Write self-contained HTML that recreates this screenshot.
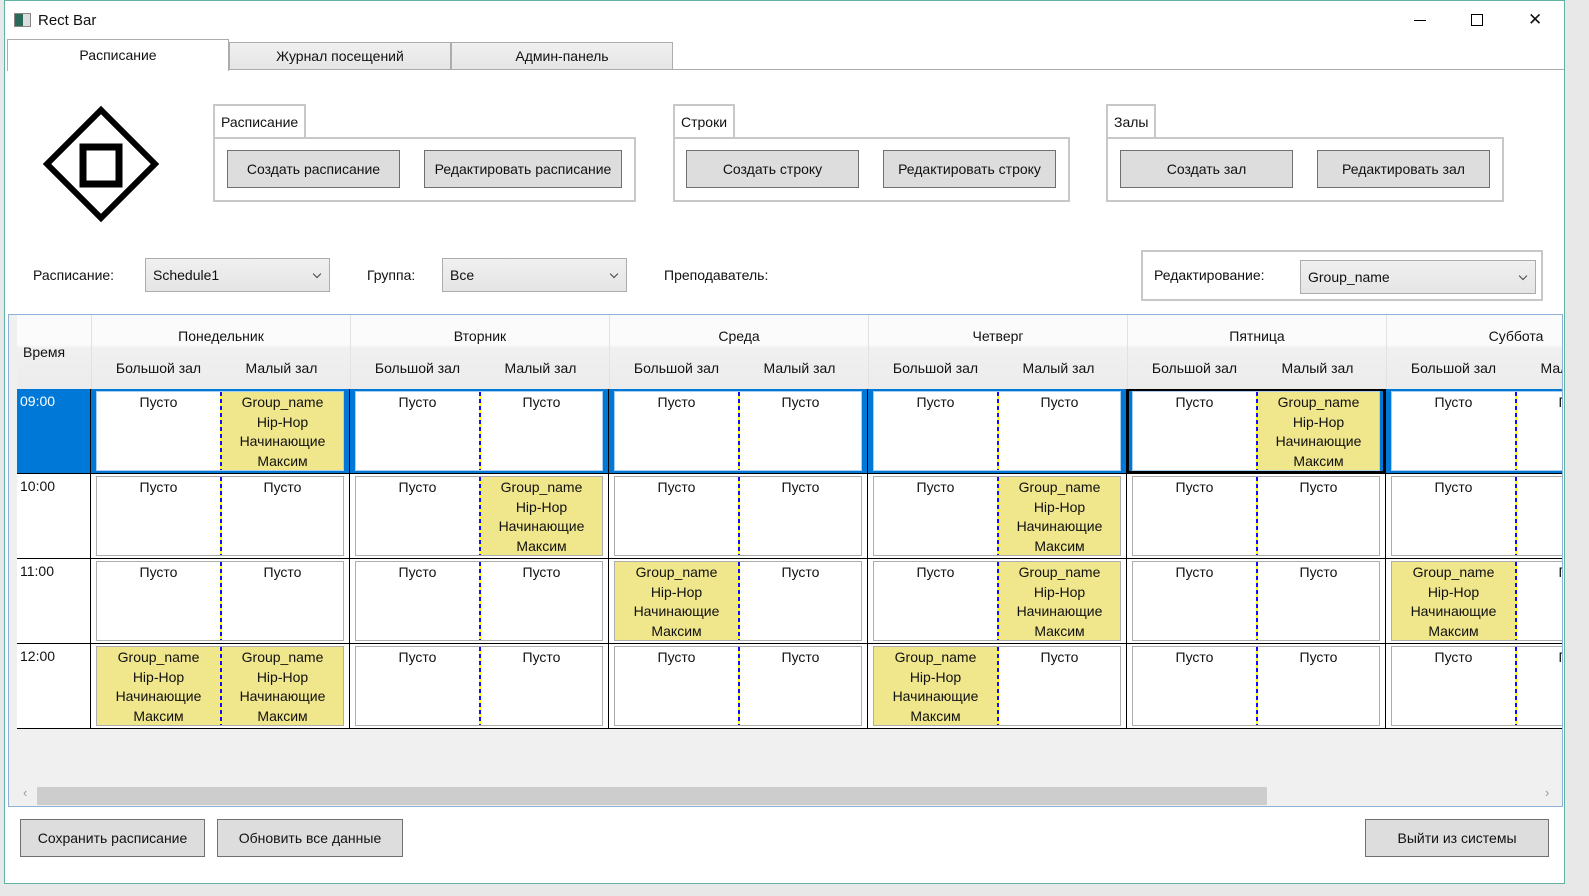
<!DOCTYPE html>
<html><head><meta charset="utf-8"><style>
*{box-sizing:border-box;margin:0;padding:0}
body{width:1589px;height:896px;overflow:hidden;background:#e8e8e8;font-family:"Liberation Sans",sans-serif;font-size:14px;color:#111;position:relative}
.a{position:absolute}
.win{left:4px;top:0;width:1561px;height:884px;background:#fff;border:1px solid #5fb3a3}
.btn{position:absolute;background:#dddddd;border:1px solid #707070;display:flex;align-items:center;justify-content:center;font-size:14px;color:#111}
.gb{position:absolute;border:2px solid #c8c8c8}
.gt{position:absolute;border:2px solid #c8c8c8;border-bottom:none;background:#fff;padding:8px 6px 0 6px;font-size:14px}
.tab{position:absolute;top:42px;height:28px;border:1px solid #acacac;background:linear-gradient(#f0f0f0,#e5e5e5);display:flex;align-items:center;justify-content:center}
.cb{position:absolute;border:1px solid #acacac;background:linear-gradient(#f0f0f0,#e5e5e5);padding-left:7px;display:flex;align-items:center}
.cb:after{content:"";position:absolute;right:9px;top:12px;width:5px;height:5px;border-right:1px solid #444;border-bottom:1px solid #444;transform:rotate(45deg)}
.grid{left:8px;top:314px;width:1555px;height:493px;border:1px solid #8fb0d8;background:#f0f0f0;overflow:hidden}
.hdr{position:absolute;left:8px;top:0;width:1700px;height:74px;background:linear-gradient(#fbfbfb 0,#fbfbfb 40%,#f0f0f0 45%,#ececec 100%)}
.dn{position:absolute;width:259px;text-align:center;border-left:1px solid #e2e2e2;height:74px;top:0;padding-top:13px}
.hn{position:absolute;top:45px;width:123px;text-align:center}
.row{position:absolute;left:8px;height:85px;display:flex;border-bottom:1px solid #000;width:1700px;background:#fff}
.t{width:74px;border-right:1px solid #000;padding:4px 3px;height:84px}
.d{width:259px;border-right:1px solid #000;height:84px;padding:2px 5px 2px 5px}
.bx{border:1px solid #adadad;height:80px;display:flex;background:#fff}
.h{width:123px;text-align:center;line-height:19.5px;padding-top:1px;overflow:hidden;white-space:nowrap}
.h+.h{background-image:repeating-linear-gradient(#1010ff 0 4px,#ffff00 4px 7px);background-size:2px 100%;background-repeat:no-repeat;background-position:0 0;padding-left:2px}
.g{background-color:#f0e68c}
.sel .t{background:#0078d7;color:#fff}
.sel .d{background:#0078d7}
.sel .bx{border-color:#a9cdee}
.sel .fr{box-shadow:inset 0 0 0 2px #000}
</style></head><body>
<div class="a win"></div>
<div class="a" style="left:14px;top:13px;width:17px;height:14px;border:1px solid #888;background:linear-gradient(90deg,#2a6a5a 0 55%,#ddd 55%)"></div>
<div class="a" style="left:38px;top:12px;font-size:15px">Rect Bar</div>
<div class="a" style="left:1414px;top:20px;width:12px;height:1px;background:#000"></div>
<div class="a" style="left:1471px;top:14px;width:12px;height:12px;border:1px solid #000"></div>
<div class="a" style="left:1528px;top:13px;font-size:17px;line-height:14px">✕</div>
<div class="tab" style="left:229px;width:222px">Журнал посещений</div>
<div class="tab" style="left:451px;width:222px">Админ-панель</div>
<div class="a" style="left:672px;top:69px;width:892px;height:1px;background:#acacac"></div>
<div class="tab" style="left:7px;top:39px;width:222px;height:32px;background:#fff;border-bottom:none;padding-bottom:2px">Расписание</div>
<svg class="a" style="left:40px;top:104px" width="124" height="122"><polygon points="61,6 115,60 61,114 7,60" fill="none" stroke="#000" stroke-width="6"/><rect x="43" y="43" width="36" height="37" fill="none" stroke="#000" stroke-width="7"/></svg>

<div class="gt" style="left:213px;top:104px;height:35px">Расписание</div>
<div class="gb" style="left:213px;top:137px;width:423px;height:65px"></div>
<div class="btn" style="left:227px;top:150px;width:173px;height:38px">Создать расписание</div>
<div class="btn" style="left:424px;top:150px;width:198px;height:38px">Редактировать расписание</div>
<div class="gt" style="left:673px;top:104px;height:35px">Строки</div>
<div class="gb" style="left:673px;top:137px;width:397px;height:65px"></div>
<div class="btn" style="left:686px;top:150px;width:173px;height:38px">Создать строку</div>
<div class="btn" style="left:883px;top:150px;width:173px;height:38px">Редактировать строку</div>
<div class="gt" style="left:1106px;top:104px;height:35px">Залы</div>
<div class="gb" style="left:1106px;top:137px;width:398px;height:65px"></div>
<div class="btn" style="left:1120px;top:150px;width:173px;height:38px">Создать зал</div>
<div class="btn" style="left:1317px;top:150px;width:173px;height:38px">Редактировать зал</div>

<div class="a" style="left:33px;top:267px">Расписание:</div>
<div class="cb" style="left:145px;top:258px;width:185px;height:34px">Schedule1</div>
<div class="a" style="left:367px;top:267px">Группа:</div>
<div class="cb" style="left:442px;top:258px;width:185px;height:34px">Все</div>
<div class="a" style="left:664px;top:267px">Преподаватель:</div>
<div class="gb" style="left:1141px;top:250px;width:402px;height:51px"></div>
<div class="a" style="left:1154px;top:267px">Редактирование:</div>
<div class="cb" style="left:1300px;top:260px;width:236px;height:34px">Group_name</div>

<div class="a grid">
<div class="hdr">
<div style="position:absolute;left:6px;top:29px">Время</div>
<div class="dn" style="left:74px">Понедельник</div><div class="dn" style="left:333px">Вторник</div><div class="dn" style="left:592px">Среда</div><div class="dn" style="left:851px">Четверг</div><div class="dn" style="left:1110px">Пятница</div><div class="dn" style="left:1369px">Суббота</div>
<div class="hn" style="left:80px">Большой зал</div><div class="hn" style="left:203px">Малый зал</div>
<div class="hn" style="left:339px">Большой зал</div><div class="hn" style="left:462px">Малый зал</div>
<div class="hn" style="left:598px">Большой зал</div><div class="hn" style="left:721px">Малый зал</div>
<div class="hn" style="left:857px">Большой зал</div><div class="hn" style="left:980px">Малый зал</div>
<div class="hn" style="left:1116px">Большой зал</div><div class="hn" style="left:1239px">Малый зал</div>
<div class="hn" style="left:1375px">Большой зал</div><div class="hn" style="left:1498px">Малый зал</div>
</div>
<div class="row sel" style="top:74px"><div class="t">09:00</div>
<div class="d"><div class="bx"><div class="h">Пусто</div><div class="h g">Group_name<br>Hip-Hop<br>Начинающие<br>Максим</div></div></div>
<div class="d"><div class="bx"><div class="h">Пусто</div><div class="h">Пусто</div></div></div>
<div class="d"><div class="bx"><div class="h">Пусто</div><div class="h">Пусто</div></div></div>
<div class="d"><div class="bx"><div class="h">Пусто</div><div class="h">Пусто</div></div></div>
<div class="d fr"><div class="bx"><div class="h">Пусто</div><div class="h g">Group_name<br>Hip-Hop<br>Начинающие<br>Максим</div></div></div>
<div class="d"><div class="bx"><div class="h">Пусто</div><div class="h">Пусто</div></div></div>
</div>
<div class="row" style="top:159px"><div class="t">10:00</div>
<div class="d"><div class="bx"><div class="h">Пусто</div><div class="h">Пусто</div></div></div>
<div class="d"><div class="bx"><div class="h">Пусто</div><div class="h g">Group_name<br>Hip-Hop<br>Начинающие<br>Максим</div></div></div>
<div class="d"><div class="bx"><div class="h">Пусто</div><div class="h">Пусто</div></div></div>
<div class="d"><div class="bx"><div class="h">Пусто</div><div class="h g">Group_name<br>Hip-Hop<br>Начинающие<br>Максим</div></div></div>
<div class="d"><div class="bx"><div class="h">Пусто</div><div class="h">Пусто</div></div></div>
<div class="d"><div class="bx"><div class="h">Пусто</div><div class="h"></div></div></div>
</div>
<div class="row" style="top:244px"><div class="t">11:00</div>
<div class="d"><div class="bx"><div class="h">Пусто</div><div class="h">Пусто</div></div></div>
<div class="d"><div class="bx"><div class="h">Пусто</div><div class="h">Пусто</div></div></div>
<div class="d"><div class="bx"><div class="h g">Group_name<br>Hip-Hop<br>Начинающие<br>Максим</div><div class="h">Пусто</div></div></div>
<div class="d"><div class="bx"><div class="h">Пусто</div><div class="h g">Group_name<br>Hip-Hop<br>Начинающие<br>Максим</div></div></div>
<div class="d"><div class="bx"><div class="h">Пусто</div><div class="h">Пусто</div></div></div>
<div class="d"><div class="bx"><div class="h g">Group_name<br>Hip-Hop<br>Начинающие<br>Максим</div><div class="h">Пусто</div></div></div>
</div>
<div class="row" style="top:329px"><div class="t">12:00</div>
<div class="d"><div class="bx"><div class="h g">Group_name<br>Hip-Hop<br>Начинающие<br>Максим</div><div class="h g">Group_name<br>Hip-Hop<br>Начинающие<br>Максим</div></div></div>
<div class="d"><div class="bx"><div class="h">Пусто</div><div class="h">Пусто</div></div></div>
<div class="d"><div class="bx"><div class="h">Пусто</div><div class="h">Пусто</div></div></div>
<div class="d"><div class="bx"><div class="h g">Group_name<br>Hip-Hop<br>Начинающие<br>Максим</div><div class="h">Пусто</div></div></div>
<div class="d"><div class="bx"><div class="h">Пусто</div><div class="h">Пусто</div></div></div>
<div class="d"><div class="bx"><div class="h">Пусто</div><div class="h">Пусто</div></div></div>
</div>
<div style="position:absolute;left:0;top:470px;width:1555px;height:21px;background:#f0f0f0"></div>
<div style="position:absolute;left:28px;top:472px;width:1230px;height:18px;background:#cdcdcd"></div>
<div style="position:absolute;left:14px;top:470px;color:#999;font-size:13px">‹</div>
<div style="position:absolute;left:1536px;top:470px;color:#999;font-size:13px">›</div>
</div>

<div class="btn" style="left:20px;top:819px;width:185px;height:38px">Сохранить расписание</div>
<div class="btn" style="left:217px;top:819px;width:186px;height:38px">Обновить все данные</div>
<div class="btn" style="left:1365px;top:819px;width:184px;height:38px">Выйти из системы</div>
</body></html>
